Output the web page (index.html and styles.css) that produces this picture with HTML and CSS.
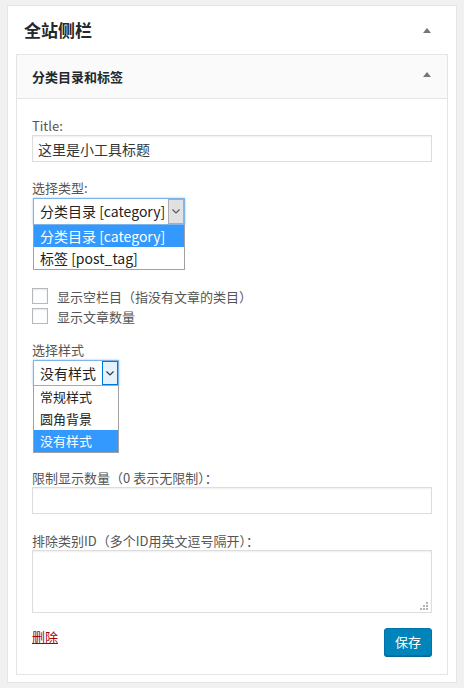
FILE: index.html
```html
<!DOCTYPE html>
<html lang="zh-CN">
<head>
<meta charset="utf-8">
<title>全站侧栏</title>
<link rel="stylesheet" href="styles.css">
</head>
<body>
<div class="panel">
  <div class="panel-head">
    <h2 class="panel-title">全站侧栏</h2>
    <span class="tri"></span>
  </div>
  <div class="widget">
    <div class="widget-head">
      <h3 class="widget-title">分类目录和标签</h3>
      <span class="tri"></span>
    </div>
    <div class="widget-body">
      <label class="label">Title:</label>
      <input class="text-input title-input" type="text" value="这里是小工具标题">

      <div class="field">
        <label class="label">选择类型:</label>
        <div class="dd dd-type">
          <div class="dd-box">
            <span class="dd-value">分类目录 [category]</span>
            <span class="dd-btn"><svg width="8" height="5" viewBox="0 0 8 5"><polyline points="0.5,0.5 4,4 7.5,0.5" fill="none" stroke="#555" stroke-width="1.1"/></svg></span>
          </div>
          <ul class="dd-list">
            <li class="dd-opt sel">分类目录 [category]</li>
            <li class="dd-opt">标签 [post_tag]</li>
          </ul>
        </div>
      </div>

      <div class="checks">
        <label class="check-row"><span class="cb"></span>显示空栏目（指没有文章的类目）</label>
        <label class="check-row"><span class="cb"></span>显示文章数量</label>
      </div>

      <div class="field field-style">
        <label class="label">选择样式</label>
        <div class="dd dd-style">
          <div class="dd-box">
            <span class="dd-value">没有样式</span>
            <span class="dd-btn focus"><svg width="8" height="5" viewBox="0 0 8 5"><polyline points="0.5,0.5 4,4 7.5,0.5" fill="none" stroke="#333" stroke-width="1.1"/></svg></span>
          </div>
          <ul class="dd-list">
            <li class="dd-opt">常规样式</li>
            <li class="dd-opt">圆角背景</li>
            <li class="dd-opt sel">没有样式</li>
          </ul>
        </div>
      </div>

      <div class="field field-limit">
        <label class="label">限制显示数量（0 表示无限制）：</label>
        <input class="text-input" type="text" value="">
      </div>

      <div class="field field-ex">
        <label class="label">排除类别ID（多个ID用英文逗号隔开）：</label>
        <div class="ta-wrap">
          <textarea class="ta"></textarea>
          <svg class="grip" width="9" height="8" viewBox="0 0 9 8">
            <rect x="6" y="0" width="2" height="2" fill="#b5b5b5"/>
            <rect x="3" y="3" width="2" height="2" fill="#b5b5b5"/>
            <rect x="6" y="3" width="2" height="2" fill="#b5b5b5"/>
            <rect x="0" y="6" width="2" height="2" fill="#b5b5b5"/>
            <rect x="3" y="6" width="2" height="2" fill="#b5b5b5"/>
            <rect x="6" y="6" width="2" height="2" fill="#b5b5b5"/>
          </svg>
        </div>
      </div>

      <div class="actions">
        <a class="delete" href="#">删除</a>
        <button class="save" type="button">保存</button>
      </div>
    </div>
  </div>
</div>
</body>
</html>
```
FILE: styles.css
```css
* { box-sizing: border-box; }
html, body { margin: 0; padding: 0; }
body {
  background: #f1f1f1;
  font-family: "Noto Sans CJK SC", "Noto Sans", sans-serif;
  font-size: 13px;
  color: #444;
}
.panel {
  margin: 5px 7px 0;
  height: 678px;
  background: #fff;
  border: 1px solid #e5e5e5;
  padding: 0 8px;
}
.panel-head {
  height: 48px;
  display: flex;
  align-items: center;
  justify-content: space-between;
  padding: 0 17px 0 8px;
}
.panel-title {
  margin: 0;
  font-size: 17px;
  font-weight: 700;
  color: #23282d;
  line-height: 20px;
}
.tri {
  width: 0;
  height: 0;
  border-left: 4px solid transparent;
  border-right: 4px solid transparent;
  border-bottom: 5px solid #72777c;
}
.widget {
  border: 1px solid #e5e5e5;
  background: #fff;
}
.widget-head {
  height: 44px;
  background: #fafafa;
  border-bottom: 1px solid #e5e5e5;
  display: flex;
  align-items: center;
  justify-content: space-between;
  padding: 0 16px 0 15px;
}
.widget-title {
  margin: 0;
  font-size: 13px;
  font-weight: 700;
  color: #23282d;
  line-height: 18px;
}
.widget-head .tri { margin-top: -5px; }
.widget-body {
  padding: 18px 15px 18px;
}
.label {
  display: block;
  line-height: 18px;
  color: #555;
}
.text-input {
  display: block;
  width: 100%;
  height: 27px;
  margin: 0;
  border: 1px solid #ddd;
  box-shadow: inset 0 1px 2px rgba(0,0,0,.07);
  padding: 0 5px;
  font-family: "Noto Sans CJK SC", "Noto Sans", sans-serif;
  font-size: 14px;
  color: #32373c;
  background: #fff;
  outline: none;
}
.field { margin-top: 17px; }
.dd { margin: 1px 0 0 1px; }
.dd-type { width: 152px; }
.dd-style { width: 86px; }
.dd-box {
  height: 27px;
  border: 1px solid #7eb4ea;
  box-shadow: 0 0 2px rgba(91,157,217,.6);
  display: flex;
  align-items: stretch;
  background: #fff;
}
.dd-style .dd-box { height: 26px; }
.dd-value {
  flex: 1;
  padding-left: 6px;
  font-size: 14px;
  line-height: 25px;
  color: #222;
  white-space: nowrap;
}
.dd-btn {
  width: 16px;
  background: #e1e1e1;
  border: 1px solid #adadad;
  display: flex;
  align-items: center;
  justify-content: center;
}
.dd-btn.focus {
  background: #e5f1fb;
  border-color: #0078d7;
}
.dd-list {
  list-style: none;
  margin: 0;
  padding: 0;
  border: 1px solid #a0a0a0;
  border-top: none;
  background: #fff;
}
.dd-opt {
  height: 22px;
  line-height: 22px;
  padding-left: 6px;
  font-size: 14px;
  color: #222;
  white-space: nowrap;
}
.dd-style .dd-opt { font-size: 13px; }
.dd-opt.sel {
  background: #3399ff;
  color: #fff;
}
.checks {
  margin-top: 16px;
}
.check-row {
  display: flex;
  align-items: center;
  height: 20px;
  gap: 9px;
  color: #555;
}
.cb {
  width: 16px;
  height: 16px;
  border: 1px solid #b4b9be;
  background: #fff;
  box-shadow: inset 0 1px 2px rgba(0,0,0,.1);
  flex: none;
}
.field-style { margin-top: 15px; }
.field-limit { margin-top: 16px; }
.field-ex { margin-top: 18px; }
.ta-wrap {
  position: relative;
}
.ta {
  display: block;
  width: 100%;
  height: 63px;
  margin: 0;
  border: 1px solid #ddd;
  box-shadow: inset 0 1px 2px rgba(0,0,0,.07);
  resize: none;
  outline: none;
  font-family: inherit;
}
.grip {
  position: absolute;
  right: 3px;
  bottom: 3px;
}
.actions {
  margin-top: 15px;
  display: flex;
  justify-content: space-between;
  align-items: flex-start;
}
.delete {
  color: #a00;
  text-decoration: underline;
  line-height: 18px;
  margin-top: 0;
}
.save {
  width: 48px;
  height: 28px;
  background: #0085ba;
  border: 1px solid #0073aa;
  border-radius: 3px;
  box-shadow: 0 1px 0 #006799;
  color: #fff;
  font-family: "Noto Sans CJK SC", "Noto Sans", sans-serif;
  font-size: 13px;
  padding: 0;
  line-height: 26px;
}
```
